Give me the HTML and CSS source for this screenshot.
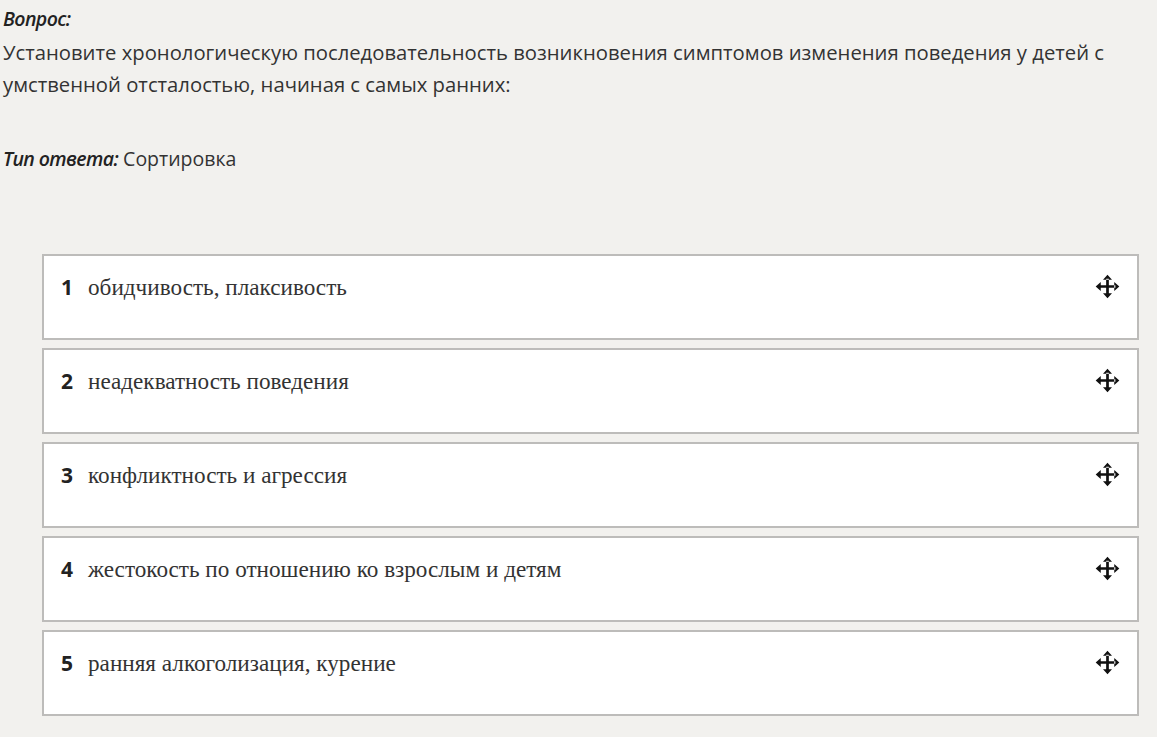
FILE: index.html
```html
<!DOCTYPE html>
<html lang="ru">
<head>
  <meta charset="UTF-8" />
  <title>Вопрос</title>
  <link rel="stylesheet" href="styles.css">
</head>
<body>

  <!-- Question -->
  <div class="question">
    <div class="label">Вопрос:</div>
    <div class="text">Установите хронологическую последовательность возникновения симптомов изменения поведения у детей с умственной отсталостью, начиная с самых ранних:</div>
  </div>

  <div class="answer-type"><span class="label">Тип ответа:</span> Сортировка</div>

  <!-- Sortable list -->
  <div class="sort-list">
    <div class="sort-item">
      <span class="num">1</span>
      <span class="item-text">обидчивость, плаксивость</span>
      <svg class="move" viewBox="0 0 24 24"><path d="M12 1.5l-4 4.5h8zM12 22.5l-4-4.5h8zM1.5 12l4.5-4v8zM22.5 12l-4.5-4v8zM10.8 5h2.4v14h-2.4zM5 10.8h14v2.4H5z"/></svg>
    </div>
    <div class="sort-item">
      <span class="num">2</span>
      <span class="item-text">неадекватность поведения</span>
      <svg class="move" viewBox="0 0 24 24"><path d="M12 1.5l-4 4.5h8zM12 22.5l-4-4.5h8zM1.5 12l4.5-4v8zM22.5 12l-4.5-4v8zM10.8 5h2.4v14h-2.4zM5 10.8h14v2.4H5z"/></svg>
    </div>
    <div class="sort-item">
      <span class="num">3</span>
      <span class="item-text">конфликтность и агрессия</span>
      <svg class="move" viewBox="0 0 24 24"><path d="M12 1.5l-4 4.5h8zM12 22.5l-4-4.5h8zM1.5 12l4.5-4v8zM22.5 12l-4.5-4v8zM10.8 5h2.4v14h-2.4zM5 10.8h14v2.4H5z"/></svg>
    </div>
    <div class="sort-item">
      <span class="num">4</span>
      <span class="item-text">жестокость по отношению ко взрослым и детям</span>
      <svg class="move" viewBox="0 0 24 24"><path d="M12 1.5l-4 4.5h8zM12 22.5l-4-4.5h8zM1.5 12l4.5-4v8zM22.5 12l-4.5-4v8zM10.8 5h2.4v14h-2.4zM5 10.8h14v2.4H5z"/></svg>
    </div>
    <div class="sort-item">
      <span class="num">5</span>
      <span class="item-text">ранняя алкоголизация, курение</span>
      <svg class="move" viewBox="0 0 24 24"><path d="M12 1.5l-4 4.5h8zM12 22.5l-4-4.5h8zM1.5 12l4.5-4v8zM22.5 12l-4.5-4v8zM10.8 5h2.4v14h-2.4zM5 10.8h14v2.4H5z"/></svg>
    </div>
  </div>

</body>
</html>
```

FILE: styles.css
```css
* { box-sizing: border-box; }

html, body {
  margin: 0;
  padding: 0;
  background: #f2f1ee;
  color: #333;
  font-family: 'Open Sans', sans-serif;
}

body {
  padding: 5px 0 0 3px;
}

.label {
  font-weight: 600;
  font-style: italic;
  color: #222;
  letter-spacing: -0.6px;
}

.question .label {
  font-size: 19.5px;
  line-height: 28px;
}

.question .text {
  font-size: 20.25px;
  line-height: 32px;
  padding-right: 40px;
  margin-top: 3px;
}

.answer-type {
  margin-top: 45px;
  font-size: 19.5px;
  line-height: 28px;
}

.sort-list {
  margin: 81px 18px 0 39px;
  display: flex;
  flex-direction: column;
  gap: 8px;
}

.sort-item {
  display: flex;
  align-items: flex-start;
  height: 86px;
  padding: 16px 16px 0 17px;
  background: #fff;
  border: 2px solid #bdbcba;
}

.num {
  font-weight: 700;
  font-size: 21px;
  line-height: 30px;
  color: #222;
  width: 27px;
}

.item-text {
  flex: 1;
  font-family: 'Liberation Serif', serif;
  font-size: 23.2px;
  line-height: 30px;
  color: #333;
}

.move {
  width: 27px;
  height: 27px;
  margin-top: 1px;
  fill: #111;
}
```
